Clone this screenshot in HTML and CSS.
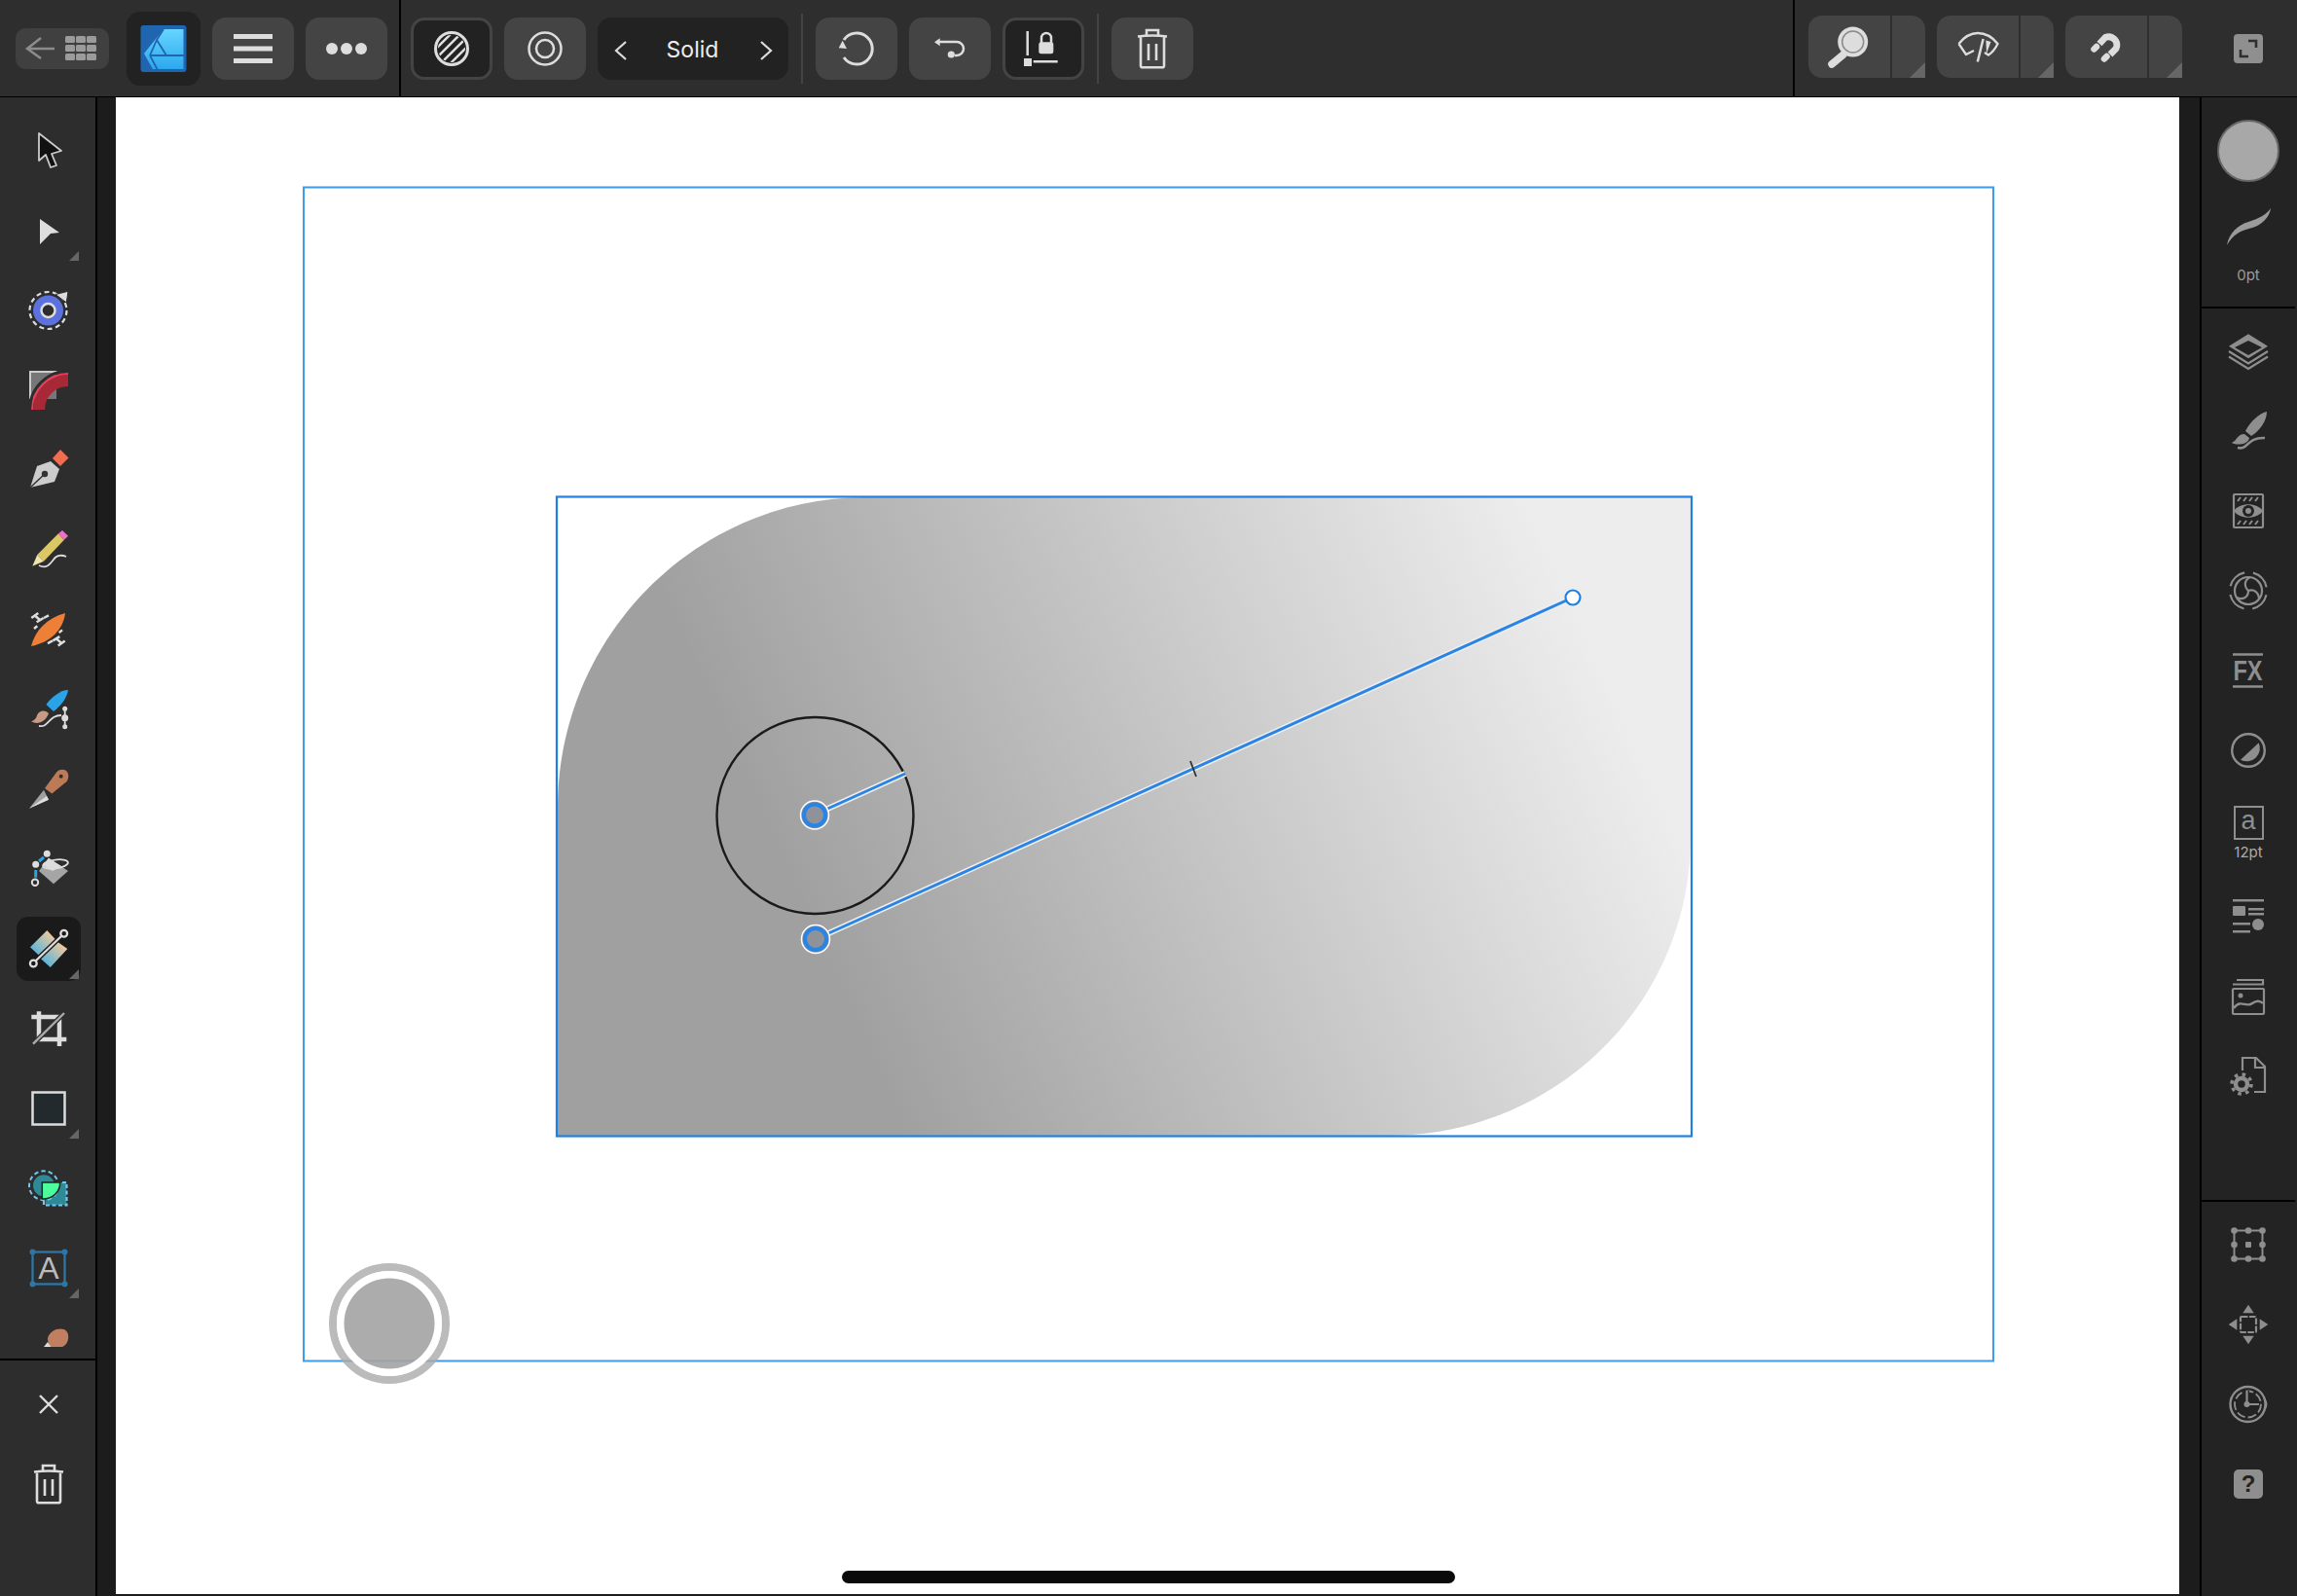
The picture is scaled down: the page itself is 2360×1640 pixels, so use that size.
FILE: index.html
```html
<!DOCTYPE html>
<html lang="en">
<head>
<meta charset="utf-8">
<title>Affinity Designer</title>
<link rel="stylesheet" href="styles.css">
</head>
<body>
<div class="app">
  <header class="topbar">
    <div class="back-btn">
      <svg class="back-ic" viewBox="0 0 96 42"><path d="M26 10 12 21 26 31M12 21H40" fill="none" stroke="#8c8c8c" stroke-width="2.5"/><g fill="#9b9b9b"><rect x="51" y="8" width="10" height="7" rx="1.5"/><rect x="62" y="8" width="10" height="7" rx="1.5"/><rect x="73" y="8" width="10" height="7" rx="1.5"/><rect x="51" y="17" width="10" height="7" rx="1.5"/><rect x="62" y="17" width="10" height="7" rx="1.5"/><rect x="73" y="17" width="10" height="7" rx="1.5"/><rect x="51" y="26" width="10" height="7" rx="1.5"/><rect x="62" y="26" width="10" height="7" rx="1.5"/><rect x="73" y="26" width="10" height="7" rx="1.5"/></g></svg>
    </div>
    <div class="logo-btn">
      <svg class="ic" viewBox="0 0 48 48"><defs><linearGradient id="lg" x1="0" y1="0" x2="0" y2="1"><stop offset="0" stop-color="#66d5ff"/><stop offset="1" stop-color="#2ca8ee"/></linearGradient></defs><rect x="0.5" y="0" width="47" height="48" rx="3" fill="#1f65b0"/><path d="M24 4H44.5V45H13L4 29Z" fill="url(#lg)"/><path d="M10 31H45M17 15 27 31M10 31 18 46M24 4 17 15 10 31" fill="none" stroke="#1f65b0" stroke-width="1.800"/></svg>
    </div>
    <div class="btn ml12"><svg class="ic" viewBox="0 0 48 48"><g fill="#ddd"><rect x="4" y="9" width="40" height="5"/><rect x="4" y="21.5" width="40" height="5"/><rect x="4" y="34" width="40" height="5"/></g></svg></div>
    <div class="btn ml12"><svg class="ic" viewBox="0 0 48 48"><g fill="#ddd"><circle cx="9" cy="24" r="6"/><circle cx="24" cy="24" r="6"/><circle cx="39" cy="24" r="6"/></g></svg></div>
    <div class="black-div dv-left"></div>
    <div class="btn dark ml10"><svg class="ic" viewBox="0 0 48 48"><defs><clipPath id="hc"><circle cx="24" cy="24" r="14"/></clipPath></defs><circle cx="24" cy="24" r="16.5" fill="none" stroke="#ddd" stroke-width="3"/><g clip-path="url(#hc)" stroke="#ddd" stroke-width="2.5"><path d="M4 28 28 4M8 34 34 8M12 40 40 12M18 44 44 18M24 48 48 24"/></g></svg></div>
    <div class="btn ml12"><svg class="ic" viewBox="0 0 48 48"><g fill="none" stroke="#ddd" stroke-width="2.5"><circle cx="24" cy="24" r="16.5"/><circle cx="24" cy="24" r="9"/></g></svg></div>
    <div class="solid ml12">
      <svg class="chev" viewBox="0 0 14 20"><path d="M12 1 2 10 12 19" fill="none" stroke="#ddd" stroke-width="2.2"/></svg>
      <span class="solid-label">Solid</span>
      <svg class="chev" viewBox="0 0 14 20"><path d="M2 1 12 10 2 19" fill="none" stroke="#ddd" stroke-width="2.2"/></svg>
    </div>
    <div class="thin-div div-a"></div>
    <div class="btn ml13"><svg class="ic" viewBox="0 0 48 48"><path d="M11 15A16 16 0 1 1 11 33" fill="none" stroke="#ddd" stroke-width="3"/><path d="M5.7 23.3 14 24 9.7 15.7Z" fill="#ddd"/></svg></div>
    <div class="btn ml12"><svg class="ic" viewBox="0 0 48 48"><path d="M8 17.3 13.7 13.3V21.3Z" fill="#ddd"/><path d="M13 17H31A7 7 0 0 1 31 31H29" fill="none" stroke="#ddd" stroke-width="2.5"/><circle cx="25.3" cy="30" r="3.6" fill="#ddd"/></svg></div>
    <div class="btn dark ml12"><svg class="ic" viewBox="0 0 48 48"><path d="M7.7 6V31M13.7 37.3H38.7M22 18V13A5 5 0 0 1 32 13V18" fill="none" stroke="#ddd" stroke-width="2.5"/><rect x="4" y="34" width="8" height="8" fill="#ddd"/><rect x="19.3" y="17.3" width="15" height="12" rx="2.5" fill="#ddd"/></svg></div>
    <div class="thin-div div-b"></div>
    <div class="btn ml13"><svg class="ic" viewBox="0 0 48 48"><path d="M9 11.5Q24 9.500 39 11.500M18 10.500V5H30V10.500M12 12V41.500Q12 43.300 14 43.300H34Q36 43.300 36 41.500V12M20 19V36M28 19V36" fill="none" stroke="#ddd" stroke-width="2.6"/></svg></div>
    <div class="bar-spacer"></div>
    <div class="black-div"></div>
    <div class="split first-split">
      <div class="split-main"><svg class="ic" viewBox="0 0 48 48"><path d="M6 42 18 32" stroke="#ddd" stroke-width="7.500" stroke-linecap="round"/><circle cx="27.700" cy="19" r="15.500" fill="#ddd"/><circle cx="27.700" cy="19" r="11" fill="none" stroke="#8a8a8a" stroke-width="1.500"/></svg></div>
      <div class="split-sep"></div>
      <div class="split-more"></div>
    </div>
    <div class="split">
      <div class="split-main"><svg class="ic" viewBox="0 0 48 48"><path d="M4.500 21C10 14 17 10 24 10 32 10 39 14 44.500 21 42 26 39 30 35 32.500L31 30M4.500 21 12 32 20 28" fill="none" stroke="#ddd" stroke-width="2.300" stroke-linejoin="round"/><path d="M23.800 39.500 29.600 16" stroke="#ddd" stroke-width="2.500"/><path d="M32.400 17.500 37.500 19 33 31Z" fill="#ddd"/></svg></div>
      <div class="split-sep"></div>
      <div class="split-more"></div>
    </div>
    <div class="split">
      <div class="split-main"><svg class="ic" viewBox="0 0 48 48"><path d="M17 21 23 14.500A8.500 8.500 0 0 1 34 26L28 32" fill="none" stroke="#ddd" stroke-width="6.800"/><path d="M11.500 26.500 14 24M22 36.500 24.500 34" stroke="#ddd" stroke-width="6.500" stroke-linecap="round"/></svg></div>
      <div class="split-sep"></div>
      <div class="split-more"></div>
    </div>
    <svg class="expand" viewBox="0 0 30 30"><rect width="30" height="30" rx="4" fill="#8f8f8f"/><path d="M15 7H23V14M7 16V23H15" fill="none" stroke="#2e2e2e" stroke-width="2.600"/></svg>
  </header>

  <div class="body">
    <aside class="left">
      <div class="tools">
        <div class="tool"><svg class="ic" viewBox="0 0 48 48"><path d="M14 6 37 24 27 27 32 39 26 41 21 28 14 34Z" fill="#111" stroke="#ccc" stroke-width="1.800" stroke-linejoin="round"/></svg></div>
        <div class="tool corner"><svg class="ic" viewBox="0 0 48 48"><path d="M15 12 35 26 26 27 15 38Z" fill="#ddd"/></svg></div>
        <div class="tool"><svg class="ic" viewBox="0 0 48 48"><circle cx="23.500" cy="24" r="19" fill="none" stroke="#ddd" stroke-width="2.200" stroke-dasharray="5 3.500"/><circle cx="23.500" cy="24" r="15.500" fill="#5c70de"/><circle cx="23.500" cy="24" r="7" fill="#2d2d2d" stroke="#ddd" stroke-width="2.500"/><path d="M31 7.500 44 4.300 42.300 16Z" fill="#ddd" stroke="#2d2d2d" stroke-width="1"/></svg></div>
        <div class="tool"><svg class="ic" viewBox="0 0 48 48"><defs><clipPath id="cc"><rect x="4" y="4" width="40" height="40"/></clipPath></defs><rect x="4" y="4" width="28" height="29" fill="#777"/><path d="M32.500 5H5V33" fill="none" stroke="#ccc" stroke-width="2"/><g clip-path="url(#cc)" fill="none"><circle cx="44" cy="44" r="39.500" stroke="#2d2d2d" stroke-width="3"/><circle cx="44" cy="44" r="30" stroke="#a82838" stroke-width="12"/><circle cx="44" cy="44" r="37" stroke="#ef3b56" stroke-width="1.800"/></g></svg></div>
        <div class="tool"><svg class="ic" viewBox="0 0 48 48"><path d="M5 42 12 20 26 15 35 23 30 36Z" fill="#ccc"/><path d="M5 42 20 28" stroke="#333" stroke-width="1.500"/><circle cx="20" cy="28" r="3.200" fill="#333"/><path d="M36 3 44.500 11.500 36 20 28 12Z" fill="#f26c4f"/></svg></div>
        <div class="tool"><svg class="ic" viewBox="0 0 48 48"><path d="M12.300 29 34 7.300 39.700 14 19 35.700Z" fill="#dcc766"/><path d="M34 7.300 38 4 44 9.700 39.700 14Z" fill="#ee6fc9"/><path d="M7.300 40.700 12.300 29 19 35.700Z" fill="#eee3a8"/><path d="M14 40C22 44 26 38 29 34 32 29 38 29 42 31" fill="none" stroke="#ddd" stroke-width="1.800"/></svg></div>
        <div class="tool"><svg class="ic" viewBox="0 0 48 48"><path d="M6 41C10 25 22 12 41 7 39 24 26 37 6 41Z" fill="#ee7f37"/><g fill="none" stroke="#ddd" stroke-width="2.500"><path d="M6.300 12 13.300 7M11.700 16.300 18.700 12M10 9.700 15.300 14.300"/><path d="M9 23 12.300 20.300M19 12 24 9.300"/></g><g transform="rotate(180 23.500 23.700)" fill="none" stroke="#ddd" stroke-width="2.500"><path d="M6.300 12 13.300 7M11.700 16.300 18.700 12M10 9.700 15.300 14.300"/><path d="M9 23 12.300 20.300M19 12 24 9.300"/></g></svg></div>
        <div class="tool"><svg class="ic" viewBox="0 0 48 48"><path d="M44 4C36 4 26 12 21.500 19L29 26C36 21 43 12 44 4Z" fill="#2aa3e8"/><path d="M24 28C20 24 14 25 12 30 11 34 8 36 5.700 36 12 40 20 38 24 28Z" fill="#c89a86"/><path d="M14 41C24 43 24 30 37 30" fill="none" stroke="#ddd" stroke-width="1.800"/><path d="M40.700 23V42" stroke="#ddd" stroke-width="1.800"/><g fill="#ddd"><circle cx="40.700" cy="23.300" r="2.500"/><circle cx="40.700" cy="32.700" r="3.500"/><circle cx="40.700" cy="41.700" r="2.500"/></g></svg></div>
        <div class="tool"><svg class="ic" viewBox="0 0 48 48"><path d="M4 43.700 19 24.700 24 34.700Z" fill="#a0a0a0"/><path d="M4 43.700 24 34.700 22 31Z" fill="#ddd"/><path d="M20 23 32.300 6.300C35 3 40.700 3 43 6 45 9 44.500 13.500 42.300 16.300L27.300 28.500Z" fill="#bd7a58"/><circle cx="36.700" cy="10.700" r="2" fill="#2d2d2d"/></svg></div>
        <div class="tool"><svg class="ic" viewBox="0 0 48 48"><path d="M14 26 24 12.700 44 26 29 39.300Z" fill="#a5a5a5"/><path d="M24 12.700 37 21 28 26 18 20Z" fill="#ddd"/><ellipse cx="31" cy="19" rx="13" ry="4.500" transform="rotate(-8 31 19)" fill="none" stroke="#ddd" stroke-width="1.800"/><g fill="#ddd"><circle cx="22.300" cy="8.300" r="3.500"/><circle cx="10.700" cy="19.300" r="3.500"/></g><circle cx="10" cy="37.700" r="3.200" fill="none" stroke="#ddd" stroke-width="2"/><path d="M14 16 19 12M10.700 25V32.700" stroke="#2aa3e8" stroke-width="3"/></svg></div>
        <div class="tool corner active"><svg class="ic" viewBox="0 0 48 48"><defs><linearGradient id="tg" x1="1" y1="0" x2="0" y2="1"><stop offset="0.150" stop-color="#efc99c"/><stop offset="0.850" stop-color="#5ab4dd"/></linearGradient></defs><path d="M5 22.300 22.300 5 32.300 15.700 15.700 32.300Z" fill="url(#tg)"/><path d="M15.700 34 32.300 16.300 43.300 24 25.700 43Z" fill="url(#tg)"/><path d="M10.500 36.500 37.500 10.500" stroke="#1a1a1a" stroke-width="5"/><path d="M10.500 36.500 37.500 10.500" stroke="#ddd" stroke-width="2.300"/><g fill="#1a1a1a" stroke="#ddd" stroke-width="2.300"><circle cx="8.300" cy="39" r="3.400"/><circle cx="39.700" cy="8.300" r="3.400"/></g></svg></div>
        <div class="tool"><svg class="ic" viewBox="0 0 48 48"><path d="M14 6.300V35H42.300M6.300 12H35V42" fill="none" stroke="#ddd" stroke-width="4.500"/><path d="M8 39.700 40 8" stroke="#2d2d2d" stroke-width="5"/><path d="M8 39.700 40 8" stroke="#aaa" stroke-width="2.400"/></svg></div>
        <div class="tool corner"><svg class="ic" viewBox="0 0 48 48"><rect x="7.500" y="7.500" width="33" height="33" fill="#232a2e" stroke="#ddd" stroke-width="2.500"/></svg></div>
        <div class="tool"><svg class="ic" viewBox="0 0 48 48"><path d="M20.700 18H42.300V41.300H20.700Z" fill="#2e8a96"/><circle cx="19" cy="21.300" r="11" fill="#2e8a96"/><circle cx="19" cy="21.300" r="15" fill="none" stroke="#70c8f0" stroke-width="2" stroke-dasharray="4.500 3"/><path d="M38 18H42.500V41.500H19V36" fill="none" stroke="#70c8f0" stroke-width="2.200" stroke-dasharray="4 2.500"/><path d="M17.300 18H35.700C36 28 28 35 17.300 35Z" fill="#4dfc9b" stroke="#222" stroke-width="1.500"/></svg></div>
        <div class="tool corner"><svg class="ic" viewBox="0 0 48 48"><rect x="7.500" y="7.500" width="33" height="33" fill="none" stroke="#2f76a6" stroke-width="2.300"/><g fill="#2f76a6"><circle cx="7.500" cy="7.500" r="3"/><circle cx="40.500" cy="7.500" r="3"/><circle cx="7.500" cy="40.500" r="3"/><circle cx="40.500" cy="40.500" r="3"/></g><text class="a-glyph" x="24" y="35" text-anchor="middle">A</text></svg></div>
        <div class="tool"><svg class="ic" viewBox="0 0 48 48"><path d="M23 14C25 6 34 3 40 5 46 8 45 17 41 21 36 26 27 25 25 22 24 20 23 17 23 14Z" fill="#c07f60"/><path d="M19 23 23 18 27 24Z" fill="#ddd"/></svg></div>
      </div>
      <div class="panel-line tools-line"></div>
      <div class="tool-foot">
        <div class="tool"><svg class="ic" viewBox="0 0 48 48"><path d="M15 15 33 33M33 15 15 33" stroke="#ddd" stroke-width="2.400"/></svg></div>
        <div class="tool"><svg class="ic" viewBox="0 0 48 48"><path d="M9 11.5Q24 9.500 39 11.500M18 10.500V5H30V10.500M12 12V41.500Q12 43.300 14 43.300H34Q36 43.300 36 41.500V12M20 19V36M28 19V36" fill="none" stroke="#ddd" stroke-width="2.600"/></svg></div>
      </div>
    </aside>

    <div class="strip"></div>

    <main class="canvas">
      <svg class="art" viewBox="119 100 2120 1538">
        <defs>
          <linearGradient id="fillg" gradientUnits="userSpaceOnUse" x1="838" y1="965" x2="1616" y2="614"><stop offset="0" stop-color="#a0a0a0"/><stop offset="1" stop-color="#ededed"/></linearGradient>
        </defs>
        <rect x="312" y="192.500" width="1736" height="1206" fill="none" stroke="#3d9be9" stroke-width="2"/>
        <path d="M573 1167V830C573 655 714 511 890 511H1737V860C1737 1030 1600 1167 1425 1167Z" fill="url(#fillg)"/>
        <rect x="572" y="510.500" width="1166" height="657" fill="none" stroke="#1f80e0" stroke-width="2.200"/>
        <circle cx="837.500" cy="838" r="101" fill="none" stroke="#1a1a1a" stroke-width="2.400"/>
        <path d="M838 965 1616 614M837 837 930 795" stroke="#eee" stroke-width="6" fill="none"/>
        <path d="M838 965 1616 614M837 837 930 795" stroke="#2a84e6" stroke-width="3" fill="none"/>
        <path d="M1223 782 1229 798" stroke="#333" stroke-width="1.800"/>
        <circle cx="837" cy="837.500" r="14.500" fill="#8f9399" stroke="#fff" stroke-width="1.500"/>
        <circle cx="837" cy="837.500" r="11" fill="#8f9399" stroke="#2a84e6" stroke-width="4"/>
        <circle cx="838" cy="965" r="14.500" fill="#8f9399" stroke="#fff" stroke-width="1.500"/>
        <circle cx="838" cy="965" r="11" fill="#8f9399" stroke="#2a84e6" stroke-width="4"/>
        <circle cx="1616" cy="614" r="7.500" fill="#fff" stroke="#1f80e0" stroke-width="2.200"/>
        <circle cx="400" cy="1360" r="58" fill="none" stroke="#aaa" stroke-width="8" opacity="0.8"/>
        <circle cx="400" cy="1360" r="50" fill="none" stroke="#fff" stroke-width="8"/>
        <circle cx="400" cy="1360" r="46.500" fill="#a3a3a3" opacity="0.9"/>
        <rect x="865" y="1614" width="630" height="13" rx="6.500" fill="#0a0a0a"/>
      </svg>
    </main>

    <div class="strip strip-right"></div>

    <aside class="right">
      <div class="r-top">
        <div class="swatch"></div>
        <svg class="ic curve" viewBox="0 0 48 48"><path d="M2 43C4 30 14 22 24 19 34 16 42 12 47 5 46 14 38 22 28 25 16 28 8 32 2 43Z" fill="#9a9a9a"/></svg>
        <div class="zero-pt">0pt</div>
      </div>
      <div class="panel-line"></div>
      <div class="r-mid">
        <div class="tool r"><svg class="ic" viewBox="0 0 48 48"><path d="M24 6.300 44 18.700 24 31.300 4 18.700Z" fill="#8e8e8e"/><path d="M24 13 38 20 24 28 10 20Z" fill="#232323"/><path d="M4 24 24 36.500 44 24M4 29.500 24 42 44 29.500" fill="none" stroke="#8e8e8e" stroke-width="2.200"/></svg></div>
        <div class="tool r"><svg class="ic" viewBox="0 0 48 48"><g fill="#8e8e8e"><path d="M43 4C36 5 26 14 21 24L27 29C35 24 43 14 43 4Z"/><path d="M20 27C14 27 12 32 10 34L7 36C12 39 24 38 25 31Z"/></g><path d="M13 41C24 44 22 30 41 31" fill="none" stroke="#8e8e8e" stroke-width="2.600"/></svg></div>
        <div class="tool r"><svg class="ic" viewBox="0 0 48 48"><rect x="9" y="7" width="30" height="34" rx="1" fill="none" stroke="#8e8e8e" stroke-width="2.200"/><path d="M13 14 16 10M19 14 22 10M25 14 28 10M31 14 34 10M13 38 16 34M19 38 22 34M25 38 28 34M31 38 34 34" stroke="#8e8e8e" stroke-width="2"/><path d="M9 24C15 15 33 15 39 24 33 33 15 33 9 24Z" fill="#8e8e8e"/><circle cx="24" cy="24" r="6" fill="#232323"/><circle cx="24" cy="24" r="3" fill="#8e8e8e"/></svg></div>
        <div class="tool r"><svg class="ic" viewBox="0 0 48 48"><g fill="none" stroke="#8e8e8e" stroke-width="2.200"><circle cx="24" cy="24" r="14"/><circle cx="24" cy="24" r="19" stroke-dasharray="21 8.850" transform="rotate(13.300 24 24)"/><path d="M24 24C19 19 20 13 26 10M24 24C30 22 35 26 35 33M24 24C24 31 18 34 12 31"/></g></svg></div>
        <div class="tool r"><svg class="ic" viewBox="0 0 48 48"><path d="M8 7.500H39M8 40.500H39" stroke="#8e8e8e" stroke-width="2.400"/><text class="fx-glyph" x="8.500" y="34" textLength="30" lengthAdjust="spacingAndGlyphs">FX</text></svg></div>
        <div class="tool r"><svg class="ic" viewBox="0 0 48 48"><circle cx="24" cy="24" r="16.800" fill="none" stroke="#8e8e8e" stroke-width="2.400"/><path d="M16 33.700 34.700 16.300A13.500 13.500 0 0 1 16 33.700Z" fill="#8e8e8e"/></svg></div>
        <div class="tool r type-row">
          <div class="type-box">a</div>
          <div class="type-size">12pt</div>
        </div>
        <div class="tool r"><svg class="ic" viewBox="0 0 48 48"><g fill="#8e8e8e"><rect x="8" y="6" width="32" height="2.500"/><rect x="8" y="13" width="13" height="10" rx="1"/><rect x="24" y="15" width="16" height="2.500"/><rect x="24" y="20" width="16" height="2.500"/><rect x="8" y="30" width="18" height="2.500"/><circle cx="34" cy="32" r="6"/><rect x="8" y="38" width="18" height="2.500"/></g></svg></div>
        <div class="tool r"><svg class="ic" viewBox="0 0 48 48"><path d="M12 7H39V12M8 11.500H40" fill="none" stroke="#8e8e8e" stroke-width="2.200"/><rect x="8" y="16" width="32" height="26" rx="1" fill="none" stroke="#8e8e8e" stroke-width="2.200"/><path d="M9 36C16 26 22 36 28 31 32 28 36 28 39 31" fill="none" stroke="#8e8e8e" stroke-width="2.400"/><circle cx="16" cy="23" r="2.500" fill="#8e8e8e"/></svg></div>
        <div class="tool r"><svg class="ic" viewBox="0 0 48 48"><path d="M18 18V5H32L41 14V40H30M31 5V15H41" fill="none" stroke="#8e8e8e" stroke-width="2.200"/><circle cx="17" cy="32" r="6" fill="none" stroke="#8e8e8e" stroke-width="4.500"/><circle cx="17" cy="32" r="10" fill="none" stroke="#8e8e8e" stroke-width="3.500" stroke-dasharray="3.500 4.400"/></svg></div>
      </div>
      <div class="panel-line"></div>
      <div class="r-foot">
        <div class="tool r"><svg class="ic" viewBox="0 0 48 48"><rect x="9.500" y="9.500" width="29" height="29" fill="none" stroke="#8e8e8e" stroke-width="2"/><g fill="#8e8e8e"><circle cx="9.500" cy="9.500" r="3.300"/><circle cx="24" cy="9.500" r="3.300"/><circle cx="38.500" cy="9.500" r="3.300"/><circle cx="9.500" cy="24" r="3.300"/><circle cx="38.500" cy="24" r="3.300"/><circle cx="9.500" cy="38.500" r="3.300"/><circle cx="24" cy="38.500" r="3.300"/><circle cx="38.500" cy="38.500" r="3.300"/><rect x="21" y="21" width="6" height="6" rx="1"/></g></svg></div>
        <div class="tool r"><svg class="ic" viewBox="0 0 48 48"><g fill="#8e8e8e"><path d="M24 3.700 29.700 12.300H18.300Z"/><path d="M24 44.300 29.700 35.700H18.300Z"/><path d="M3.700 24 12.300 18.300V29.700Z"/><path d="M44.300 24 35.700 18.300V29.700Z"/></g><rect x="16" y="16" width="16" height="16" rx="1" fill="none" stroke="#8e8e8e" stroke-width="2.200" stroke-dasharray="6.500 1.500"/></svg></div>
        <div class="tool r"><svg class="ic" viewBox="0 0 48 48"><circle cx="23.500" cy="24" r="18" fill="none" stroke="#8e8e8e" stroke-width="2.400"/><path d="M41.500 19C44 21 44 27 41.500 29Z" fill="#8e8e8e"/><circle cx="23.500" cy="24" r="13.500" fill="none" stroke="#8e8e8e" stroke-width="1.800" stroke-dasharray="9 3"/><path d="M22.500 10V24H35" fill="none" stroke="#232323" stroke-width="5"/><path d="M22.500 10V24H35" fill="none" stroke="#8e8e8e" stroke-width="2.200"/><circle cx="22.500" cy="24" r="3" fill="#8e8e8e"/></svg></div>
        <div class="tool r"><div class="help">?</div></div>
      </div>
    </aside>
  </div>
</div>
</body>
</html>
```

FILE: styles.css
```css
* { box-sizing: border-box; }
html, body { margin: 0; padding: 0; background: #000; }
body { width: 2360px; height: 1640px; overflow: hidden; font-family: "Inter", "Liberation Sans", sans-serif; }
.app { width: 2360px; height: 1640px; display: flex; flex-direction: column; }

.topbar { height: 100px; flex: none; display: flex; align-items: center; background: #2e2e2e; border-bottom: 1px solid #000; padding: 1px 0 0 16px; }
.ic { width: 48px; height: 48px; display: block; flex: none; }
.back-btn { width: 96px; height: 42px; background: #404040; border-radius: 10px; flex: none; }
.back-ic { width: 96px; height: 42px; display: block; }
.logo-btn { width: 76px; height: 76px; margin-left: 18px; background: #222; border-radius: 14px; display: flex; align-items: center; justify-content: center; flex: none; }
.btn { width: 84px; height: 64px; background: #444; border-radius: 14px; display: flex; align-items: center; justify-content: center; flex: none; }
.btn.dark { background: #222; border: 3px solid #444; }
.ml10 { margin-left: 10px; }
.ml12 { margin-left: 12px; }
.ml13 { margin-left: 13px; }
.black-div { width: 2px; background: #000; align-self: stretch; margin-top: -1px; flex: none; }
.dv-left { margin-left: 12px; }
.solid { width: 196px; height: 64px; background: #222; border-radius: 14px; display: flex; align-items: center; justify-content: space-between; padding: 4px 16px 0 17px; flex: none; }
.chev { width: 14px; height: 20px; display: block; }
.solid-label { color: #eee; font-size: 23px; line-height: 28px; margin: -2px 2px 0 0; }
.thin-div { width: 2px; height: 72px; background: #444; flex: none; }
.div-a { margin-left: 13px; }
.div-b { margin-left: 13px; }
.bar-spacer { flex: 1; }
.split { width: 120px; height: 64px; margin: 0 0 4px 12px; display: flex; background: #444; border-radius: 14px 14px 0 14px; overflow: hidden; flex: none; }
.first-split { margin-left: 14px; }
.split-main { width: 84px; display: flex; align-items: center; justify-content: center; flex: none; }
.split-sep { width: 2px; background: #2e2e2e; flex: none; }
.split-more { flex: 1; position: relative; }
.split-more::after { content: ""; position: absolute; right: 0; bottom: 0; width: 16px; height: 16px; background: #666; clip-path: polygon(100% 0, 100% 100%, 0 100%); }
.expand { width: 30px; height: 30px; margin: 0 35px 0 53px; display: block; flex: none; }

.body { flex: 1; min-height: 0; display: flex; }
.left { width: 100px; flex: none; background: #2d2d2d; border-right: 2px solid #000; padding-left: 2px; display: flex; flex-direction: column; }
.tools { height: 1284px; overflow: hidden; padding-top: 14px; flex: none; }
.tool { height: 82px; display: flex; align-items: center; justify-content: center; position: relative; flex: none; }
.corner::after { content: ""; position: absolute; left: 69px; top: 62px; width: 10px; height: 10px; background: #666; clip-path: polygon(100% 0, 100% 100%, 0 100%); }
.active::before { content: ""; position: absolute; left: 15px; top: 8px; width: 66px; height: 66px; background: #1a1a1a; border-radius: 12px; }
.active .ic { position: relative; }
.panel-line { height: 2px; background: #000; flex: none; }
.tools-line { margin: 12px 0 0 -2px; }
.tool-foot { padding-top: 4px; }
.a-glyph { font-family: "Liberation Sans", sans-serif; font-size: 32px; fill: #bbb; }
.fx-glyph { font-family: "Liberation Sans", sans-serif; font-weight: 700; font-size: 29px; fill: #8e8e8e; }

.strip { width: 19px; flex: none; background: #1c1c1c; }
.strip-right { width: 21px; }
.canvas { flex: 1; min-width: 0; background: #fff; border-bottom: 2px solid #1c1c1c; position: relative; }
.art { position: absolute; left: 0; top: 0; width: 2120px; height: 1538px; display: block; }

.right { width: 100px; flex: none; background: #232323; border-left: 2px solid #000; padding-right: 2px; display: flex; flex-direction: column; }
.r-top { height: 215px; flex: none; display: flex; flex-direction: column; align-items: center; padding-top: 24px; }
.swatch { width: 64px; height: 64px; margin-top: -1px; border-radius: 50%; background: #a8a8a8; border: 2px solid #666; flex: none; }
.curve { margin-top: 22px; }
.zero-pt { margin-top: 16px; color: #9a9a9a; font-size: 15px; line-height: 20px; }
.r-mid { height: 916px; flex: none; padding-top: 3px; }
.type-row { height: 89px; flex-direction: column; justify-content: flex-start; padding-top: 16px; }
.type-box { width: 31px; height: 35px; border: 2px solid #8e8e8e; color: #8e8e8e; font-family: "Liberation Sans", sans-serif; font-size: 27px; line-height: 27px; text-align: center; flex: none; }
.type-size { color: #aaa; font-size: 15px; line-height: 26px; flex: none; }
.r-foot { padding-top: 3px; }
.help { width: 30px; height: 30px; border-radius: 5px; background: #8e8e8e; color: #232323; font-family: "Liberation Sans", sans-serif; font-weight: 700; font-size: 24px; line-height: 30px; text-align: center; }
```
